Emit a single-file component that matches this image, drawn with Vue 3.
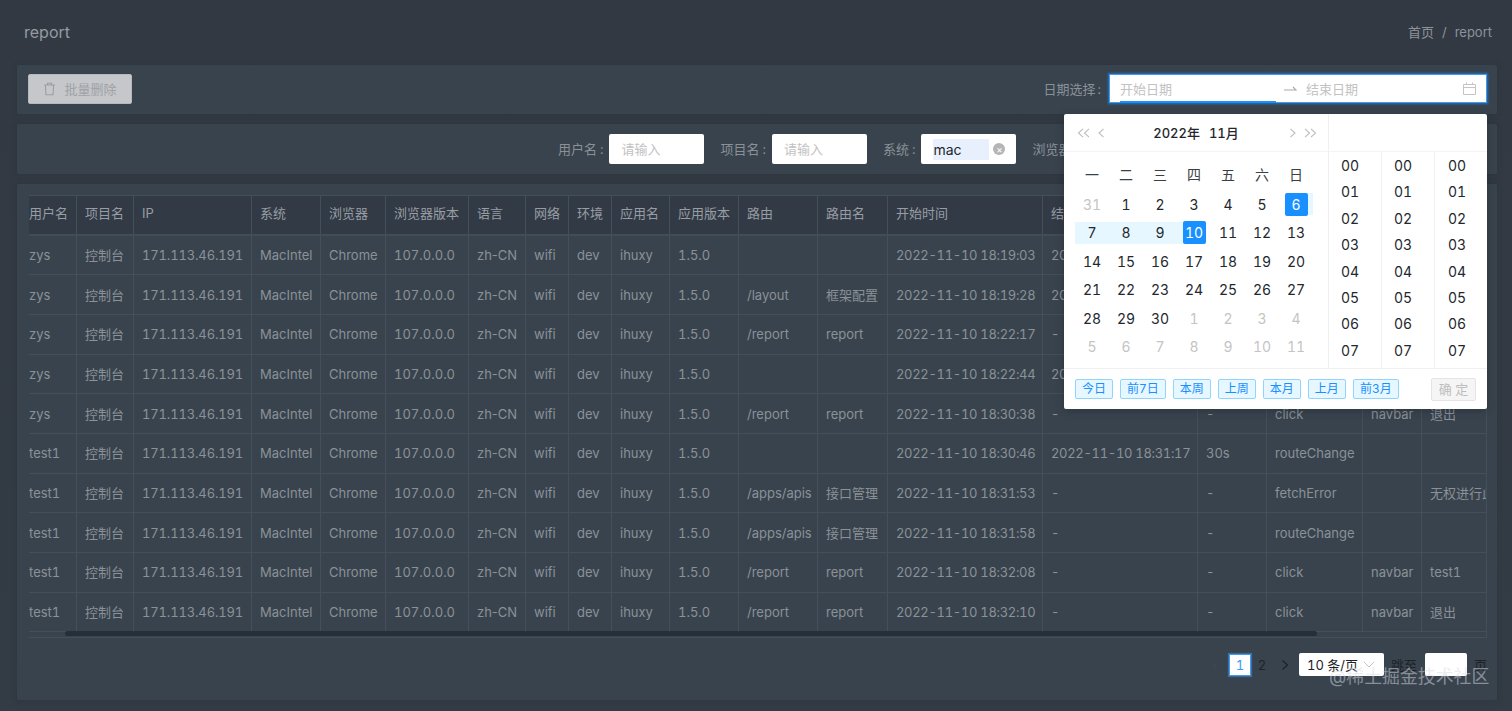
<script setup>
const columns = [
  { title: '用户名', key: 'user', width: 56 },
  { title: '项目名', key: 'project', width: 57 },
  { title: 'IP', key: 'ip', width: 118 },
  { title: '系统', key: 'os', width: 69 },
  { title: '浏览器', key: 'browser', width: 65 },
  { title: '浏览器版本', key: 'version', width: 83 },
  { title: '语言', key: 'lang', width: 57 },
  { title: '网络', key: 'net', width: 43 },
  { title: '环境', key: 'env', width: 43 },
  { title: '应用名', key: 'app', width: 58 },
  { title: '应用版本', key: 'appVersion', width: 69 },
  { title: '路由', key: 'route', width: 79 },
  { title: '路由名', key: 'routeName', width: 70 },
  { title: '开始时间', key: 'start', width: 155 },
  { title: '结束时间', key: 'end', width: 155 },
  { title: '停留时长', key: 'stay', width: 69 },
  { title: '类型', key: 'type', width: 96 },
  { title: '模块', key: 'module', width: 59 },
  { title: '内容', key: 'content', width: 100 }
]
const base = {
  project: '控制台', ip: '171.113.46.191', os: 'MacIntel', browser: 'Chrome', version: '107.0.0.0',
  lang: 'zh-CN', net: 'wifi', env: 'dev', app: 'ihuxy', appVersion: '1.5.0'
}
const rows = [
  { user: 'zys', route: '', routeName: '', start: '2022-11-10 18:19:03', end: '2022-11-10 18:19:28', stay: '25s', type: 'routeChange', module: '', content: '' },
  { user: 'zys', route: '/layout', routeName: '框架配置', start: '2022-11-10 18:19:28', end: '2022-11-10 18:22:17', stay: '169s', type: 'routeChange', module: '', content: '' },
  { user: 'zys', route: '/report', routeName: 'report', start: '2022-11-10 18:22:17', end: '-', stay: '-', type: 'click', module: 'navbar', content: '退出' },
  { user: 'zys', route: '', routeName: '', start: '2022-11-10 18:22:44', end: '2022-11-10 18:30:38', stay: '474s', type: 'routeChange', module: '', content: '' },
  { user: 'zys', route: '/report', routeName: 'report', start: '2022-11-10 18:30:38', end: '-', stay: '-', type: 'click', module: 'navbar', content: '退出' },
  { user: 'test1', route: '', routeName: '', start: '2022-11-10 18:30:46', end: '2022-11-10 18:31:17', stay: '30s', type: 'routeChange', module: '', content: '' },
  { user: 'test1', route: '/apps/apis', routeName: '接口管理', start: '2022-11-10 18:31:53', end: '-', stay: '-', type: 'fetchError', module: '', content: '无权进行此操作' },
  { user: 'test1', route: '/apps/apis', routeName: '接口管理', start: '2022-11-10 18:31:58', end: '-', stay: '-', type: 'routeChange', module: '', content: '' },
  { user: 'test1', route: '/report', routeName: 'report', start: '2022-11-10 18:32:08', end: '-', stay: '-', type: 'click', module: 'navbar', content: 'test1' },
  { user: 'test1', route: '/report', routeName: 'report', start: '2022-11-10 18:32:10', end: '-', stay: '-', type: 'click', module: 'navbar', content: '退出' }
].map(r => ({ ...base, ...r }))

const weekdays = ['一', '二', '三', '四', '五', '六', '日']
const days = [
  [31, 'off'], [1], [2], [3], [4], [5], [6, 'sel head'],
  [7, 'inrange'], [8, 'inrange'], [9, 'inrange'], [10, 'sel tail'], [11], [12], [13],
  [14], [15], [16], [17], [18], [19], [20],
  [21], [22], [23], [24], [25], [26], [27],
  [28], [29], [30], [1, 'off'], [2, 'off'], [3, 'off'], [4, 'off'],
  [5, 'off'], [6, 'off'], [7, 'off'], [8, 'off'], [9, 'off'], [10, 'off'], [11, 'off']
]
const times = ['00', '01', '02', '03', '04', '05', '06', '07']
const presets = ['今日', '前7日', '本周', '上周', '本月', '上月', '前3月']
const fields = [
  { label: '用户名', placeholder: '请输入' },
  { label: '项目名', placeholder: '请输入' },
  { label: '系统', value: 'mac' },
  { label: '浏览器', placeholder: '请输入' },
  { label: '环境', placeholder: '请输入' },
  { label: '应用名', placeholder: '请输入' }
]
</script>

<template>
  <div class="page">
    <header class="topbar">
      <span class="title">report</span>
      <nav class="crumbs"><span>首页</span><span class="slash">/</span><span>report</span></nav>
    </header>

    <section class="card toolbar">
      <button class="del-btn" type="button">
        <svg width="13" height="14" viewBox="0 0 13 14" fill="none" stroke="#9b9ea3" stroke-width="1.1">
          <path d="M1 3h11M4.5 3V1.2h4V3M2.4 3l.5 9.8h7.2l.5-9.8" />
        </svg>
        <span>批量删除</span>
      </button>
      <div class="date-field">
        <span class="label">日期选择<i class="colon">:</i></span>
        <div class="date-range">
          <span class="ph start">开始日期</span>
          <svg class="arrow" width="14" height="8" viewBox="0 0 14 8" fill="none" stroke="#a9a9a9" stroke-width="1.1">
            <path d="M1 5h12L10 2" />
          </svg>
          <span class="ph end">结束日期</span>
          <svg width="13" height="13" viewBox="0 0 13 13" fill="none" stroke="#c4c4c4" stroke-width="1">
            <path d="M.5 2.5h12v10H.5zM.5 5.5h12M3.5.5v2M9.5.5v2" />
          </svg>
        </div>
      </div>
    </section>

    <section class="card filters">
      <div v-for="f in fields" :key="f.label" class="field">
        <span class="label">{{ f.label }}<i class="colon">:</i></span>
        <div class="input">
          <template v-if="f.value">
            <span class="selected">{{ f.value }}</span>
            <span class="clear">×</span>
          </template>
          <span v-else class="ph">{{ f.placeholder }}</span>
        </div>
      </div>
    </section>

    <section class="card table-card">
      <div class="table-wrap">
        <table class="grid">
          <colgroup>
            <col v-for="c in columns" :key="c.key" :style="{ width: c.width + 'px' }" />
          </colgroup>
          <thead>
            <tr><th v-for="c in columns" :key="c.key">{{ c.title }}</th></tr>
          </thead>
          <tbody>
            <tr v-for="(r, i) in rows" :key="i">
              <td v-for="c in columns" :key="c.key" :class="'col-' + c.key">{{ r[c.key] }}</td>
            </tr>
          </tbody>
        </table>
        <div class="scroll-thumb"></div>
      </div>
      <div class="pager">
        <span class="prev">‹</span>
        <span class="pg active">1</span>
        <span class="pg">2</span>
        <svg class="next" width="8" height="12" viewBox="0 0 8 12" fill="none" stroke="#1d2229" stroke-width="1.2">
          <path d="M1.5 1.5 6.5 6l-5 4.500" />
        </svg>
        <div class="size">
          <span>10 条/页</span>
          <svg width="12" height="7" viewBox="0 0 12 7" fill="none" stroke="#c4c4c4" stroke-width="1">
            <path d="M.8.8 6 6l5.200-5.200" />
          </svg>
        </div>
        <span class="jump">跳至</span>
        <span class="jump-input"></span>
        <span class="jump">页</span>
      </div>
    </section>

    <div class="picker">
      <div class="date-panel">
        <div class="cal-head">
          <div class="nav">
            <svg width="14" height="10" viewBox="0 0 14 10" fill="none" stroke="#bdbdbd" stroke-width="1.100"><path d="M6 .8 1.500 5 6 9.200M12 .8 7.500 5l4.500 4.200" /></svg>
            <svg width="7" height="10" viewBox="0 0 7 10" fill="none" stroke="#bdbdbd" stroke-width="1.100"><path d="M5.500.8 1 5l4.500 4.200" /></svg>
          </div>
          <div class="ym"><span>2022年</span><span>11月</span></div>
          <div class="nav">
            <svg width="7" height="10" viewBox="0 0 7 10" fill="none" stroke="#bdbdbd" stroke-width="1.100"><path d="M1.500.8 6 5 1.500 9.200" /></svg>
            <svg width="14" height="10" viewBox="0 0 14 10" fill="none" stroke="#bdbdbd" stroke-width="1.100"><path d="M2 .8 6.500 5 2 9.200M8 .8 12.500 5 8 9.200" /></svg>
          </div>
        </div>
        <div class="cal-body">
          <span v-for="w in weekdays" :key="w" class="wk">{{ w }}</span>
          <span v-for="(d, i) in days" :key="i" class="day" :class="d[1]"><b>{{ d[0] }}</b></span>
        </div>
      </div>
      <div class="time-panel">
        <div class="time-head"></div>
        <div class="time-cols">
          <ul v-for="n in 3" :key="n" class="time-col">
            <li v-for="t in times" :key="t">{{ t }}</li>
          </ul>
        </div>
      </div>
      <div class="picker-foot">
        <div class="presets"><span v-for="p in presets" :key="p" class="preset">{{ p }}</span></div>
        <span class="ok">确 定</span>
      </div>
    </div>

    <div class="watermark">@稀土掘金技术社区</div>
  </div>
</template>

<style>
html, body { margin: 0; background: #2f3741; }
</style>

<style scoped>
.page {
  position: relative;
  height: 711px;
  box-sizing: border-box;
  padding: 0 15px 0 17px;
  overflow: hidden;
  background: linear-gradient(#323943, #333b45);
  font-family: Inter, "Noto Sans CJK SC", sans-serif;
  font-size: 13px;
  line-height: 20px;
  font-variant-numeric: tabular-nums;
  color: #8a9198;
}
.topbar {
  height: 65px;
  display: flex;
  align-items: center;
  justify-content: space-between;
  padding: 0 5px 0 7px;
  box-sizing: border-box;
}
.title { font-size: 16px; color: #959ba2; margin-top: -2px; }
.crumbs { display: flex; gap: 8px; color: #8d939a; font-size: 13px; margin-top: -2px; }
.card {
  background: #39434d;
  box-shadow: 0 0 5px rgba(40, 47, 56, 0.55);
  border-radius: 2px;
}
.toolbar {
  height: 49px;
  box-sizing: border-box;
  display: flex;
  align-items: center;
  justify-content: space-between;
  padding: 0 10px 2px 11px;
  margin-bottom: 10px;
}
.del-btn {
  width: 104px;
  height: 30px;
  display: flex;
  align-items: center;
  justify-content: center;
  gap: 8px;
  border: 1px solid #b5b8bc;
  border-radius: 2px;
  background: #c5c7ca;
  color: #9fa2a6;
  font: inherit;
  padding: 0;
}
.date-field { display: flex; align-items: center; gap: 8px; }
.label { color: #8a9198; white-space: nowrap; }
.colon { font-style: normal; margin-left: 2px; }
.date-range {
  position: relative;
  width: 378px;
  height: 29px;
  box-sizing: border-box;
  display: flex;
  align-items: center;
  padding: 0 10px;
  background: #fff;
  border: 1px solid #3f9bf0;
  box-shadow: 0 0 2px 1px rgba(24, 144, 255, 0.6);
}
.date-range::after {
  content: "";
  position: absolute;
  left: 10px;
  bottom: -1px;
  width: 156px;
  height: 2px;
  background: #1890ff;
}
.ph { color: #c2c2c2; }
.ph.start { width: 163px; }
.arrow { margin-right: 9px; flex: none; }
.ph.end { flex: 1; }
.filters {
  height: 50px;
  box-sizing: border-box;
  display: flex;
  align-items: center;
  justify-content: flex-end;
  gap: 16px;
  padding: 0 10px 0 0;
  margin-bottom: 10px;
  overflow: hidden;
}
.field { display: flex; align-items: center; gap: 6px; }
.field .colon { margin-left: 3px; }
.input {
  width: 95px;
  height: 30px;
  box-sizing: border-box;
  display: flex;
  align-items: center;
  justify-content: space-between;
  padding: 0 11px 0 12px;
  background: #fff;
  border-radius: 2px;
}
.field:last-child .input { width: 91px; }
.selected {
  width: 56px;
  height: 21px;
  line-height: 21px;
  background: #e8f0fe;
  color: #23272d;
  font-size: 14px;
}
.clear {
  width: 12px;
  height: 12px;
  border-radius: 50%;
  background: #b5b5b5;
  color: #fff;
  font-size: 10px;
  line-height: 12px;
  text-align: center;
}
.table-card {
  height: 516px;
  box-sizing: border-box;
  padding: 11px 10px 0 12px;
}
.table-wrap {
  position: relative;
  height: 443px;
  overflow: hidden;
  border-right: 1px solid #444f5a;
  border-bottom: 1px solid #444f5a;
  border-top: 1px solid #444f5a;
  box-sizing: border-box;
}
.grid {
  width: 1501px;
  margin-left: -8px;
  table-layout: fixed;
  border-collapse: separate;
  border-spacing: 0;
}
.grid th, .grid td {
  padding: 0 8px;
  text-align: left;
  font-weight: 400;
  white-space: nowrap;
  overflow: hidden;
  border-right: 1px solid #444f5a;
  box-sizing: border-box;
}
.grid th {
  height: 39.6px;
  background: #323a45;
  color: #979da4;
  border-bottom: 2px solid #424c57;
  padding-bottom: 3px;
}
.grid td {
  height: 39.7px;
  border-bottom: 1px solid #444f5a;
}
.grid td.col-start, .grid td.col-end { letter-spacing: -0.32px; }
.grid td.col-ip { letter-spacing: -0.15px; }
.grid td.col-lang { font-variant-numeric: normal; }
.scroll-thumb {
  position: absolute;
  left: 36px;
  bottom: 1px;
  width: 1252px;
  height: 5px;
  border-radius: 3px;
  background: #262e38;
}
.pager {
  display: flex;
  align-items: center;
  justify-content: flex-end;
  margin-top: 15px;
  color: #1d2229;
}
.prev { color: #3f4954; margin-right: 11px; font-size: 16px; }
.pg {
  width: 22px;
  height: 22px;
  line-height: 22px;
  text-align: center;
  margin-right: 1px;
}
.pg.active {
  box-sizing: border-box;
  line-height: 20px;
  background: #fff;
  border: 1px solid #3f9bf0;
  box-shadow: 0 0 1px 1px rgba(63, 155, 240, 0.45);
  color: #3f9bf0;
  margin-right: 0;
}
.next { margin: 0 10px 0 7px; }
.size {
  width: 85px;
  height: 23px;
  box-sizing: border-box;
  display: flex;
  align-items: center;
  justify-content: space-between;
  padding: 0 9px 0 8px;
  background: #fff;
  border-radius: 2px;
  font-size: 13px;
}
.jump { margin: 0 8px 0 7px; color: #1d2229; }
.jump-input { width: 42px; height: 23px; background: #fff; border-radius: 2px; }
.jump:last-child { margin-right: 0; }
.picker {
  position: absolute;
  left: 1064px;
  top: 114px;
  width: 423px;
  height: 295px;
  display: grid;
  grid-template-columns: 265px 1fr;
  grid-template-rows: 254px 41px;
  background: #fff;
  border-radius: 2px;
  box-shadow: 0 2px 8px rgba(20, 26, 33, 0.3);
  color: #23272d;
  font-size: 14px;
}
.date-panel { border-right: 1px solid #f0f0f0; }
.cal-head {
  height: 38px;
  box-sizing: border-box;
  display: flex;
  align-items: center;
  justify-content: space-between;
  padding: 0 11px 0 13px;
  border-bottom: 1px solid #f4f4f4;
}
.nav { display: flex; align-items: center; gap: 7px; }
.ym { display: flex; gap: 9px; font-weight: 500; font-size: 13px; margin-left: -2px; }
.cal-body {
  display: grid;
  grid-template-columns: repeat(7, 34px);
  grid-template-rows: 29.400px;
  grid-auto-rows: 28.400px;
  padding: 9px 11px 0;
}
.wk, .day { display: flex; align-items: center; justify-content: center; }
.wk { color: #3a3f45; align-items: flex-start; padding-top: 4px; box-sizing: border-box; }
.day b { font-weight: 400; width: 23px; height: 23px; line-height: 23px; text-align: center; border-radius: 2px; }
.day.off { color: #c4c4c4; }
.day.inrange { background: linear-gradient(transparent 3px, #e6f7ff 3px, #e6f7ff 25px, transparent 25px); }
.day.head { background: linear-gradient(transparent 3px, #e6f7ff 3px, #e6f7ff 25px, transparent 25px) right / 50% 100% no-repeat; }
.day.tail { background: linear-gradient(transparent 3px, #e6f7ff 3px, #e6f7ff 25px, transparent 25px) left / 50% 100% no-repeat; }
.day.sel b { background: #1890ff; color: #fff; }
.time-panel { display: flex; flex-direction: column; }
.time-head { height: 38px; flex: none; box-sizing: border-box; border-bottom: 1px solid #f4f4f4; }
.time-cols { flex: 1; display: grid; grid-template-columns: 53px 53px 52px; }
.time-col {
  list-style: none;
  margin: 0;
  padding: 1px 0 0;
  border-right: 1px solid #f0f0f0;
}
.time-col:last-child { border-right: 0; }
.time-col li { height: 26.400px; line-height: 26.400px; text-align: center; padding-right: 10px; }
.time-col:last-child li { padding-right: 8px; }
.picker-foot {
  grid-column: 1 / -1;
  display: flex;
  align-items: center;
  justify-content: space-between;
  padding: 0 11px;
  border-top: 1px solid #f0f0f0;
}
.presets { display: flex; gap: 7px; }
.preset {
  height: 20px;
  line-height: 18px;
  box-sizing: border-box;
  padding: 0 6px;
  background: #e6f7ff;
  border: 1px solid #91d5ff;
  border-radius: 2px;
  color: #1890ff;
  font-size: 12px;
}
.ok {
  width: 45px;
  height: 23px;
  line-height: 21px;
  box-sizing: border-box;
  text-align: center;
  background: #f5f5f5;
  border: 1px solid #e4e4e4;
  border-radius: 2px;
  color: #bdbdbd;
  font-size: 13px;
}
.watermark {
  position: absolute;
  left: 1329px;
  top: 667px;
  font-size: 17.900px;
  color: rgba(215, 220, 225, 0.5);
  white-space: nowrap;
}
</style>
